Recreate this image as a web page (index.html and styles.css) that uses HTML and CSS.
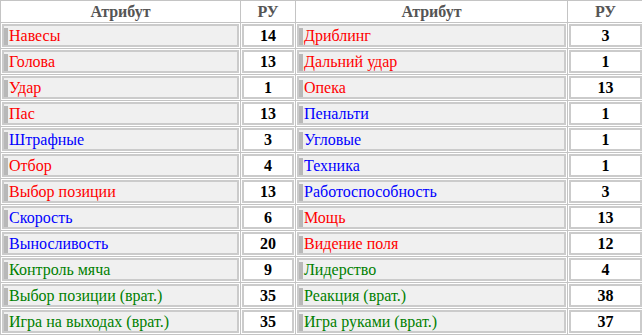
FILE: index.html
```html
<!DOCTYPE html>
<html>
<head>
<meta charset="utf-8">
<link rel="stylesheet" href="styles.css">
</head>
<body>
<div class="grid">
  <div class="head">Атрибут</div><div class="head">РУ</div><div class="head">Атрибут</div><div class="head">РУ</div>

  <div class="cell"><div class="attr r"><span class="bar"></span>Навесы</div></div><div class="cell"><div class="val">14</div></div>
  <div class="cell"><div class="attr r"><span class="bar"></span>Дриблинг</div></div><div class="cell"><div class="val">3</div></div>

  <div class="cell"><div class="attr r"><span class="bar"></span>Голова</div></div><div class="cell"><div class="val">13</div></div>
  <div class="cell"><div class="attr r"><span class="bar"></span>Дальний удар</div></div><div class="cell"><div class="val">1</div></div>

  <div class="cell"><div class="attr r"><span class="bar"></span>Удар</div></div><div class="cell"><div class="val">1</div></div>
  <div class="cell"><div class="attr r"><span class="bar"></span>Опека</div></div><div class="cell"><div class="val">13</div></div>

  <div class="cell"><div class="attr r"><span class="bar"></span>Пас</div></div><div class="cell"><div class="val">13</div></div>
  <div class="cell"><div class="attr b"><span class="bar"></span>Пенальти</div></div><div class="cell"><div class="val">1</div></div>

  <div class="cell"><div class="attr b"><span class="bar"></span>Штрафные</div></div><div class="cell"><div class="val">3</div></div>
  <div class="cell"><div class="attr b"><span class="bar"></span>Угловые</div></div><div class="cell"><div class="val">1</div></div>

  <div class="cell"><div class="attr r"><span class="bar"></span>Отбор</div></div><div class="cell"><div class="val">4</div></div>
  <div class="cell"><div class="attr b"><span class="bar"></span>Техника</div></div><div class="cell"><div class="val">1</div></div>

  <div class="cell"><div class="attr r"><span class="bar"></span>Выбор позиции</div></div><div class="cell"><div class="val">13</div></div>
  <div class="cell"><div class="attr b"><span class="bar"></span>Работоспособность</div></div><div class="cell"><div class="val">3</div></div>

  <div class="cell"><div class="attr b"><span class="bar"></span>Скорость</div></div><div class="cell"><div class="val">6</div></div>
  <div class="cell"><div class="attr r"><span class="bar"></span>Мощь</div></div><div class="cell"><div class="val">13</div></div>

  <div class="cell"><div class="attr b"><span class="bar"></span>Выносливость</div></div><div class="cell"><div class="val">20</div></div>
  <div class="cell"><div class="attr r"><span class="bar"></span>Видение поля</div></div><div class="cell"><div class="val">12</div></div>

  <div class="cell"><div class="attr g"><span class="bar"></span>Контроль мяча</div></div><div class="cell"><div class="val">9</div></div>
  <div class="cell"><div class="attr g"><span class="bar"></span>Лидерство</div></div><div class="cell"><div class="val">4</div></div>

  <div class="cell"><div class="attr g"><span class="bar"></span>Выбор позиции (врат.)</div></div><div class="cell"><div class="val">35</div></div>
  <div class="cell"><div class="attr g"><span class="bar"></span>Реакция (врат.)</div></div><div class="cell"><div class="val">38</div></div>

  <div class="cell"><div class="attr g"><span class="bar"></span>Игра на выходах (врат.)</div></div><div class="cell"><div class="val">35</div></div>
  <div class="cell"><div class="attr g"><span class="bar"></span>Игра руками (врат.)</div></div><div class="cell"><div class="val">37</div></div>
</div>
</body>
</html>
```
FILE: styles.css
```css
html, body {
  margin: 0;
  padding: 0;
  background: #fff;
  overflow: hidden;
}
body {
  font-family: "Liberation Serif", "Times New Roman", serif;
  font-size: 16px;
}
.grid {
  display: grid;
  width: 644px;
  grid-template-columns: 239px 54px 271px 75px;
  grid-template-rows: 21px repeat(12, 25px);
  gap: 1px;
  padding: 1px;
  background: #c4c4c4;
  box-sizing: border-box;
}
.head {
  background: #fff;
  color: #555;
  font-weight: bold;
  text-align: center;
  line-height: 21px;
}
.cell {
  background: #fff;
  padding: 1px;
}
.attr, .val {
  box-sizing: border-box;
  height: 23px;
  border: 2px solid #cbcbcb;
  line-height: 19px;
  white-space: nowrap;
  overflow: hidden;
}
.attr {
  background: #f0f0f0;
  display: flex;
  align-items: center;
}
.bar {
  flex: none;
  align-self: flex-end;
  width: 4px;
  height: 17px;
  background: #b8b8b8;
  margin-right: 1px;
}
.val {
  background: #fff;
  text-align: center;
  font-weight: bold;
  color: #000;
}
.r { color: #ff0000; }
.b { color: #0000ff; }
.g { color: #008000; }
```
